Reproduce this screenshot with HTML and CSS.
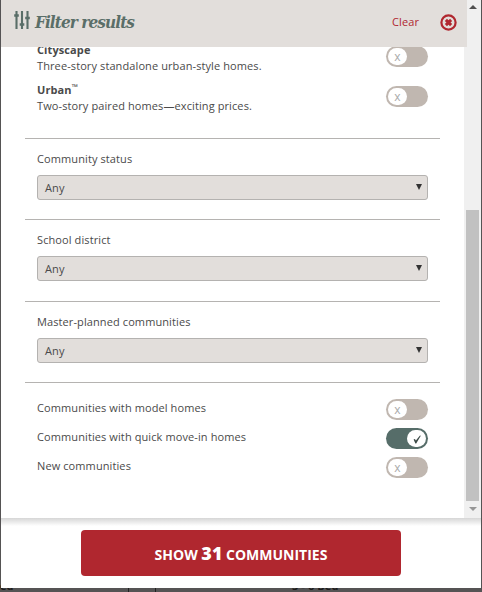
FILE: index.html
```html
<!DOCTYPE html>
<html lang="en">
<head>
    <meta charset="UTF-8">
    <meta name="viewport" content="width=device-width, initial-scale=1.0">
    <title>Filter results</title>
    <link rel="stylesheet" href="styles.css">
</head>
<body>

<div class="page-behind">
    <span class="behind-text left">ed</span>
    <span class="behind-text right">3 - 6 Bed</span>
</div>

<div class="filter-panel">
    <header class="filter-header">
        <svg class="icon-sliders" width="16" height="18" viewBox="0 0 16 18">
            <path d="M2.5 0v18M8 0v18M13.5 0v18" stroke="#5a6e68" stroke-width="2.1"/>
            <path d="M0.2 4.5h4.6M5.7 13.5h4.6M11.2 7h4.6" stroke="#5a6e68" stroke-width="2.6"/>
        </svg>
        <h1>Filter results</h1>
        <a class="clear">Clear</a>
        <svg class="icon-close" width="17" height="17" viewBox="0 0 17 17">
            <circle cx="8.5" cy="8.5" r="7.1" fill="none" stroke="#b0272f" stroke-width="2.2"/>
            <path d="M5.9 5.9l5.2 5.2M11.1 5.9l-5.2 5.2" stroke="#b0272f" stroke-width="3"/>
        </svg>
    </header>

    <div class="filter-body">
        <div class="filter-content">
            <div class="plans">
                <div class="plan">
                    <div class="plan-text"><strong>Cityscape</strong><p>Three-story standalone urban-style homes.</p></div>
                    <span class="toggle"><span class="knob">x</span></span>
                </div>
                <div class="plan">
                    <div class="plan-text"><strong>Urban<sup>™</sup></strong><p>Two-story paired homes—exciting prices.</p></div>
                    <span class="toggle"><span class="knob">x</span></span>
                </div>
            </div>

            <div class="field">
                <label>Community status</label>
                <div class="select"><span>Any</span><i class="arrow"></i></div>
            </div>
            <div class="field">
                <label>School district</label>
                <div class="select"><span>Any</span><i class="arrow"></i></div>
            </div>
            <div class="field">
                <label>Master-planned communities</label>
                <div class="select"><span>Any</span><i class="arrow"></i></div>
            </div>

            <div class="options">
                <div class="option">
                    <span>Communities with model homes</span>
                    <span class="toggle"><span class="knob">x</span></span>
                </div>
                <div class="option">
                    <span>Communities with quick move-in homes</span>
                    <span class="toggle on"><span class="knob">
                        <svg width="10" height="10" viewBox="0 0 10 10"><path d="M1.6 5.4l1.3-.5 1 1.6L8 1.4l.8.4L4.2 9.4h-.8z" fill="#3d4b48"/></svg>
                    </span></span>
                </div>
                <div class="option">
                    <span>New communities</span>
                    <span class="toggle"><span class="knob">x</span></span>
                </div>
            </div>
        </div>

        <div class="scrollbar">
            <i class="scroll-up"></i>
            <div class="thumb"></div>
            <i class="scroll-down"></i>
        </div>
    </div>

    <footer class="filter-footer">
        <button class="btn">SHOW <b>31</b> COMMUNITIES</button>
    </footer>
</div>

</body>
</html>
```
FILE: styles.css
```css
* {
    box-sizing: border-box;
}
body {
    margin: 0;
    height: 592px;
    overflow: hidden;
    position: relative;
    background-color: #555354;
    font-family: "Open Sans", sans-serif;
    font-size: 11px;
    line-height: 16px;
    letter-spacing: 0.1px;
    color: #4a4a4a;
}
.page-behind {
    position: absolute;
    left: 0;
    top: 580px;
    width: 482px;
    height: 12px;
    overflow: hidden;
}
.page-behind::before {
    content: "";
    position: absolute;
    left: 128px;
    top: 0;
    width: 26px;
    height: 12px;
    border: solid #222;
    border-width: 0 1px;
}
.behind-text {
    position: absolute;
    top: -2px;
    font-weight: bold;
    font-size: 11px;
    line-height: 16px;
    color: #1c1c1c;
}
.behind-text.left {
    left: 0;
}
.behind-text.right {
    left: 292px;
}
.filter-panel {
    position: relative;
    display: flex;
    flex-direction: column;
    width: 480px;
    height: 588px;
    margin-left: 1px;
    background-color: #fff;
}
.filter-header {
    position: relative;
    z-index: 1;
    display: flex;
    align-items: center;
    width: 466px;
    height: 47px;
    padding: 0 10px 4px 13px;
    background-color: #e2dedb;
}
.filter-header h1 {
    margin: 0 auto 0 5px;
    font-family: "DejaVu Serif Condensed", "DejaVu Serif", serif;
    font-stretch: condensed;
    font-size: 17px;
    font-style: italic;
    font-weight: bold;
    line-height: 24px;
    letter-spacing: -0.9px;
    white-space: nowrap;
    color: #5a6e68;
}
.icon-sliders {
    margin-top: -3px;
}
.clear {
    margin-right: 21px;
    color: #b0272f;
}
.icon-close {
    margin-top: 1px;
}
.filter-body {
    display: flex;
    justify-content: space-between;
    height: 471px;
}
.filter-content {
    width: 415px;
    margin: -5px 0 0 24px;
}
.plans {
    height: 96px;
    padding: 0 12px;
}
.plan {
    display: flex;
    justify-content: space-between;
    height: 40px;
}
.plan .toggle {
    margin-top: 4px;
}
.plan-text strong {
    display: block;
    height: 16px;
}
.plan-text sup {
    font-size: 8px;
    line-height: 0;
    vertical-align: 4px;
}
.plan-text p {
    margin: 0;
}
.field {
    height: 81.4px;
    padding: 12px 12px 0;
    border-top: 1px solid #b5b3b1;
}
.field label {
    display: block;
    height: 24px;
}
.select {
    display: flex;
    align-items: center;
    justify-content: space-between;
    height: 25px;
    padding: 0 5px 0 7px;
    border: 1px solid #b4b2b0;
    border-radius: 3px;
    background-color: #e2dedb;
}
.select span {
    padding-top: 1px;
}
.arrow {
    margin-top: -1px;
    border: solid transparent;
    border-width: 6px 3.5px 0;
    border-top-color: #333;
}
.options {
    padding: 16px 12px 0;
    border-top: 1px solid #b5b3b1;
}
.option {
    display: flex;
    justify-content: space-between;
    height: 29px;
}
.option > span:first-child {
    padding-top: 1px;
}
.toggle {
    display: flex;
    width: 42px;
    height: 21px;
    padding: 2px;
    border-radius: 11px;
    background-color: #c0b7b0;
}
.toggle.on {
    justify-content: flex-end;
    background-color: #566d69;
}
.knob {
    display: flex;
    align-items: center;
    justify-content: center;
    width: 19px;
    height: 17px;
    border-radius: 9px;
    background-color: #fff;
    font-size: 12px;
    color: #aaa;
}
.scrollbar {
    display: flex;
    flex-direction: column;
    align-items: center;
    width: 17px;
    height: 518px;
    margin-top: -47px;
    padding: 5px 2px 7px;
    background-color: #f0f0f0;
}
.thumb {
    width: 13px;
    height: 291px;
    margin: 201px 0 6px;
    background-color: #c1c1c1;
}
.scroll-up {
    border: solid transparent;
    border-width: 0 4px 4px;
    border-bottom-color: #505050;
}
.scroll-down {
    border: solid transparent;
    border-width: 4px 4px 0;
    border-top-color: #969696;
}
.filter-footer {
    display: flex;
    justify-content: center;
    height: 70px;
    padding-top: 12px;
    background: linear-gradient(#d6d6d6, #fff 8px);
}
.btn {
    width: 320px;
    height: 46px;
    padding: 0 0 1px;
    border: none;
    border-radius: 4px;
    background-color: #b0272f;
    font-family: "Open Sans", sans-serif;
    font-size: 14px;
    font-weight: bold;
    letter-spacing: 0;
    color: #fff;
}
.btn b {
    font-size: 18px;
}
```
